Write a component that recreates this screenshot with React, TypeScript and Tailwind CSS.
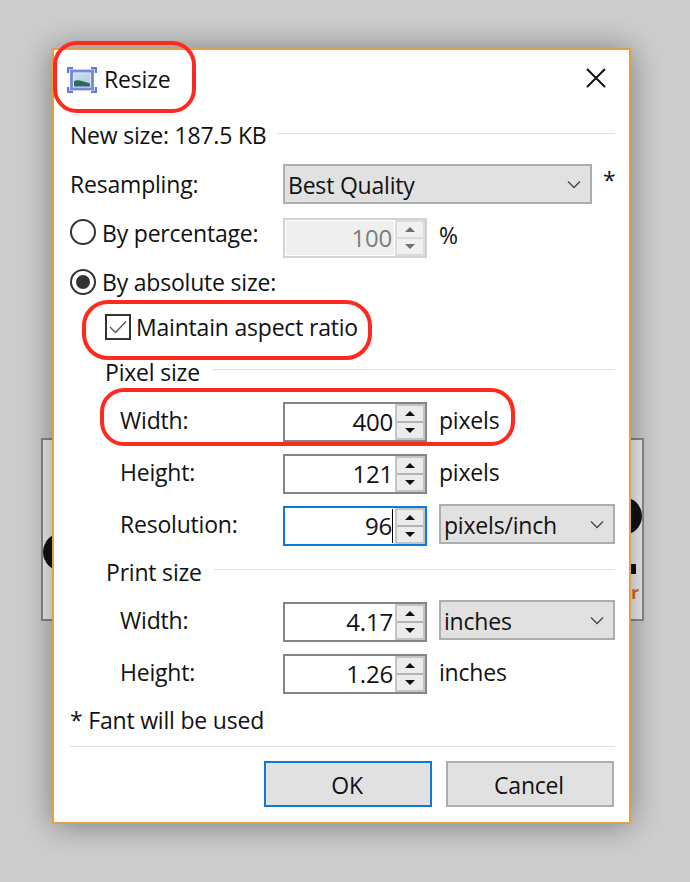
import React from "react";

function Chevron() {
  return (
    <svg width="14" height="9" viewBox="0 0 14 9" fill="none" stroke="#444" strokeWidth="1.3">
      <path d="M1 1.5 L7 7.5 L13 1.5" />
    </svg>
  );
}

function Spinner({ value, focused, disabled }: { value: string; focused?: boolean; disabled?: boolean }) {
  const border = disabled ? "border-[#d2d2d2]" : focused ? "border-[#0f78d8]" : "border-[#858585]";
  const arrow = disabled ? "#707070" : "#111";
  return (
    <div className={`flex h-[40px] w-[144px] shrink-0 items-stretch border-2 bg-white ${border}`}>
      <div className={`flex flex-1 items-center justify-end pr-[2px] text-[24px] ${disabled ? "m-[1px] bg-[#efefef] text-[#7d7d7d]" : ""}`}>
        <span className={focused ? "border-r border-black leading-[34px]" : ""}>{value}</span>
      </div>
      <div className={`flex w-[30px] flex-col border-2 ${disabled ? "border-[#dcdcdc] bg-[#f1f1f1]" : "border-[#c4c4c4] bg-[#ececec]"}`}>
        <div className="flex flex-1 items-center justify-center">
          <svg width="10" height="5" viewBox="0 0 10 5"><path d="M5 0 L10 5 H0 Z" fill={arrow} /></svg>
        </div>
        <div className={`h-[2px] ${disabled ? "bg-[#dcdcdc]" : "bg-[#b4b4b4]"}`} />
        <div className="flex flex-1 items-center justify-center">
          <svg width="10" height="5" viewBox="0 0 10 5"><path d="M0 0 H10 L5 5 Z" fill={arrow} /></svg>
        </div>
      </div>
    </div>
  );
}

function Select({ value, width }: { value: string; width: string }) {
  return (
    <div className={`flex h-[40px] items-center justify-between border-2 border-[#adadad] bg-[#e1e1e1] pr-[9px] pl-[3px] ${width}`}>
      <span className="mt-[2px]">{value}</span>
      <Chevron />
    </div>
  );
}

function Radio({ on, className = "" }: { on?: boolean; className?: string }) {
  return (
    <div className={`flex h-[26px] w-[26px] items-center justify-center rounded-full border-2 border-[#333] bg-white ${className}`}>
      {on && <div className="h-[14px] w-[14px] rounded-full bg-[#333]" />}
    </div>
  );
}

function Rule({ className }: { className: string }) {
  return <div className={`h-px flex-1 bg-[#d9e0e8] ${className}`} />;
}

function Row({ label, children }: { label: string; children: React.ReactNode }) {
  return (
    <div className="flex h-[40px] items-center">
      <span className="mb-[4px] w-[229px] pl-[66px]">{label}</span>
      {children}
    </div>
  );
}

export default function App() {
  return (
    <div
      className="relative h-[882px] w-[690px] overflow-hidden bg-[#cdcdcd] text-[#111] text-[23px]"
      style={{ fontFamily: '"Open Sans", "Noto Sans", sans-serif', letterSpacing: "-0.2px" }}
    >
      {/* image behind the dialog */}
      <div className="absolute top-[438px] left-[41px] h-[183px] w-[603px] overflow-hidden border-2 border-[#8a8a8a] bg-[#f0f0f0]">
        <div className="absolute top-[93px] left-[0px] h-[38px] w-[40px] rounded-full bg-[#111]" />
        <div className="absolute top-[57px] right-[0px] h-[38px] w-[40px] rounded-full bg-[#111]" />
        <div className="absolute top-[124px] right-[6px] h-[10px] w-[6px] bg-[#111]" />
        <span className="absolute top-[140px] right-[3px] text-[18px] leading-[24px] font-bold text-[#e0702a]">r</span>
      </div>

      {/* dialog */}
      <div className="absolute top-[48px] left-[52px] h-[776px] w-[579px] border-2 border-[#e0a04a] bg-white shadow-[0_1px_30px_rgba(0,0,0,0.4)]">
        <div className="flex h-[59px] items-center pr-[23px] pl-[13px]">
          <svg width="30" height="26" viewBox="0 0 30 26" fill="none">
            <defs>
              <linearGradient id="sky" x1="0" y1="0" x2="1" y2="1">
                <stop offset="0" stopColor="#cfe3f2" />
                <stop offset="1" stopColor="#a9c9e2" />
              </linearGradient>
            </defs>
            <path d="M1 6V1H6M24 1H29V6M29 20V25H24M6 25H1V20" stroke="#5f7be0" strokeWidth="2.6" />
            <rect x="4.5" y="4" width="21" height="18" fill="#dfe6f7" stroke="#7089e2" strokeWidth="2.8" />
            <rect x="7" y="6.5" width="16" height="13" fill="url(#sky)" />
            <path d="M7 14 C11 12 15 14 23 16.5 V19.5 H7 Z" fill="#2f6a5c" />
          </svg>
          <span className="ml-[7px]">Resize</span>
          <svg className="mb-[3px] ml-auto" width="20" height="20" viewBox="0 0 20 20" stroke="#111" strokeWidth="2">
            <path d="M1 1 L19 19 M19 1 L1 19" />
          </svg>
        </div>

        <div className="mt-[9px] flex h-[34px] items-center pr-[14px] pl-[16px]">
          <span className="whitespace-nowrap">New size: 187.5 KB</span>
          <Rule className="mb-[4px] ml-[11px]" />
        </div>

        <div className="mt-[12px] flex h-[40px] items-center pl-[16px]">
          <span className="w-[213px]">Resampling:</span>
          <Select value="Best Quality" width="w-[309px]" />
          <span className="mt-[-8px] ml-[11px] self-center">*</span>
        </div>

        <div className="mt-[14px] flex h-[40px] items-start pl-[16px]">
          <Radio className="mt-[1px]" />
          <span className="mt-[-2px] ml-[6px] w-[181px]">By percentage:</span>
          <Spinner value="100" disabled />
          <span className="ml-[12px]">%</span>
        </div>

        <div className="mt-[11px] flex h-[26px] items-center pl-[16px]">
          <Radio on />
          <span className="ml-[6px]">By absolute size:</span>
        </div>

        <div className="mt-[19px] flex h-[26px] items-center pl-[51px]">
          <div className="flex h-[26px] w-[26px] items-center justify-center border-2 border-[#333]">
            <svg width="18" height="14" viewBox="0 0 18 14" fill="none" stroke="#555" strokeWidth="1.4">
              <path d="M1 7 L6.5 12.5 L17 1.5" />
            </svg>
          </div>
          <span className="ml-[5px]">Maintain aspect ratio</span>
        </div>

        <div className="mt-[15px] flex h-[32px] items-center pr-[14px] pl-[51px]">
          <span className="mt-[2px]">Pixel size</span>
          <Rule className="mb-[4px] ml-[12px]" />
        </div>

        <div className="mt-[15px]">
          <Row label="Width:">
            <Spinner value="400" />
            <span className="mb-[4px] ml-[12px]">pixels</span>
          </Row>
        </div>
        <div className="mt-[12px]">
          <Row label="Height:">
            <Spinner value="121" />
            <span className="mb-[4px] ml-[12px]">pixels</span>
          </Row>
        </div>
        <div className="mt-[12px]">
          <Row label="Resolution:">
            <Spinner value="96" focused />
            <div className="mt-[-4px] ml-[12px]">
              <Select value="pixels/inch" width="w-[176px]" />
            </div>
          </Row>
        </div>

        <div className="mt-[9px] flex h-[32px] items-center pr-[14px] pl-[52px]">
          <span className="mt-[2px]">Print size</span>
          <Rule className="mb-[4px] ml-[12px]" />
        </div>

        <div className="mt-[15px]">
          <Row label="Width:">
            <Spinner value="4.17" />
            <div className="mt-[-4px] ml-[12px]">
              <Select value="inches" width="w-[176px]" />
            </div>
          </Row>
        </div>
        <div className="mt-[12px]">
          <Row label="Height:">
            <Spinner value="1.26" />
            <span className="mb-[4px] ml-[12px]">inches</span>
          </Row>
        </div>

        <div className="mt-[10px] flex h-[32px] items-center pl-[16px]">* Fant will be used</div>

        <div className="mt-[10px] mr-[14px] ml-[16px] h-px bg-[#d9e0e8]" />

        <div className="mt-[14px] flex justify-end gap-[14px] pr-[15px]">
          <div className="flex h-[46px] w-[168px] items-center justify-center border-2 border-[#0f78d8] bg-[#e1e1e1] pt-[2px] pr-[2px]">OK</div>
          <div className="flex h-[46px] w-[168px] items-center justify-center border-2 border-[#adadad] bg-[#e1e1e1] pt-[2px] pr-[2px]">Cancel</div>
        </div>
      </div>

      {/* red annotations */}
      <div className="absolute top-[41px] left-[53px] h-[72px] w-[143px] rounded-[24px] border-4 border-[#ff2a1f]" />
      <div className="absolute top-[300px] left-[82px] h-[60px] w-[290px] rounded-[26px] border-4 border-[#ff2a1f]" />
      <div className="absolute top-[388px] left-[100px] h-[58px] w-[415px] rounded-[24px] border-4 border-[#ff2a1f]" />
    </div>
  );
}
